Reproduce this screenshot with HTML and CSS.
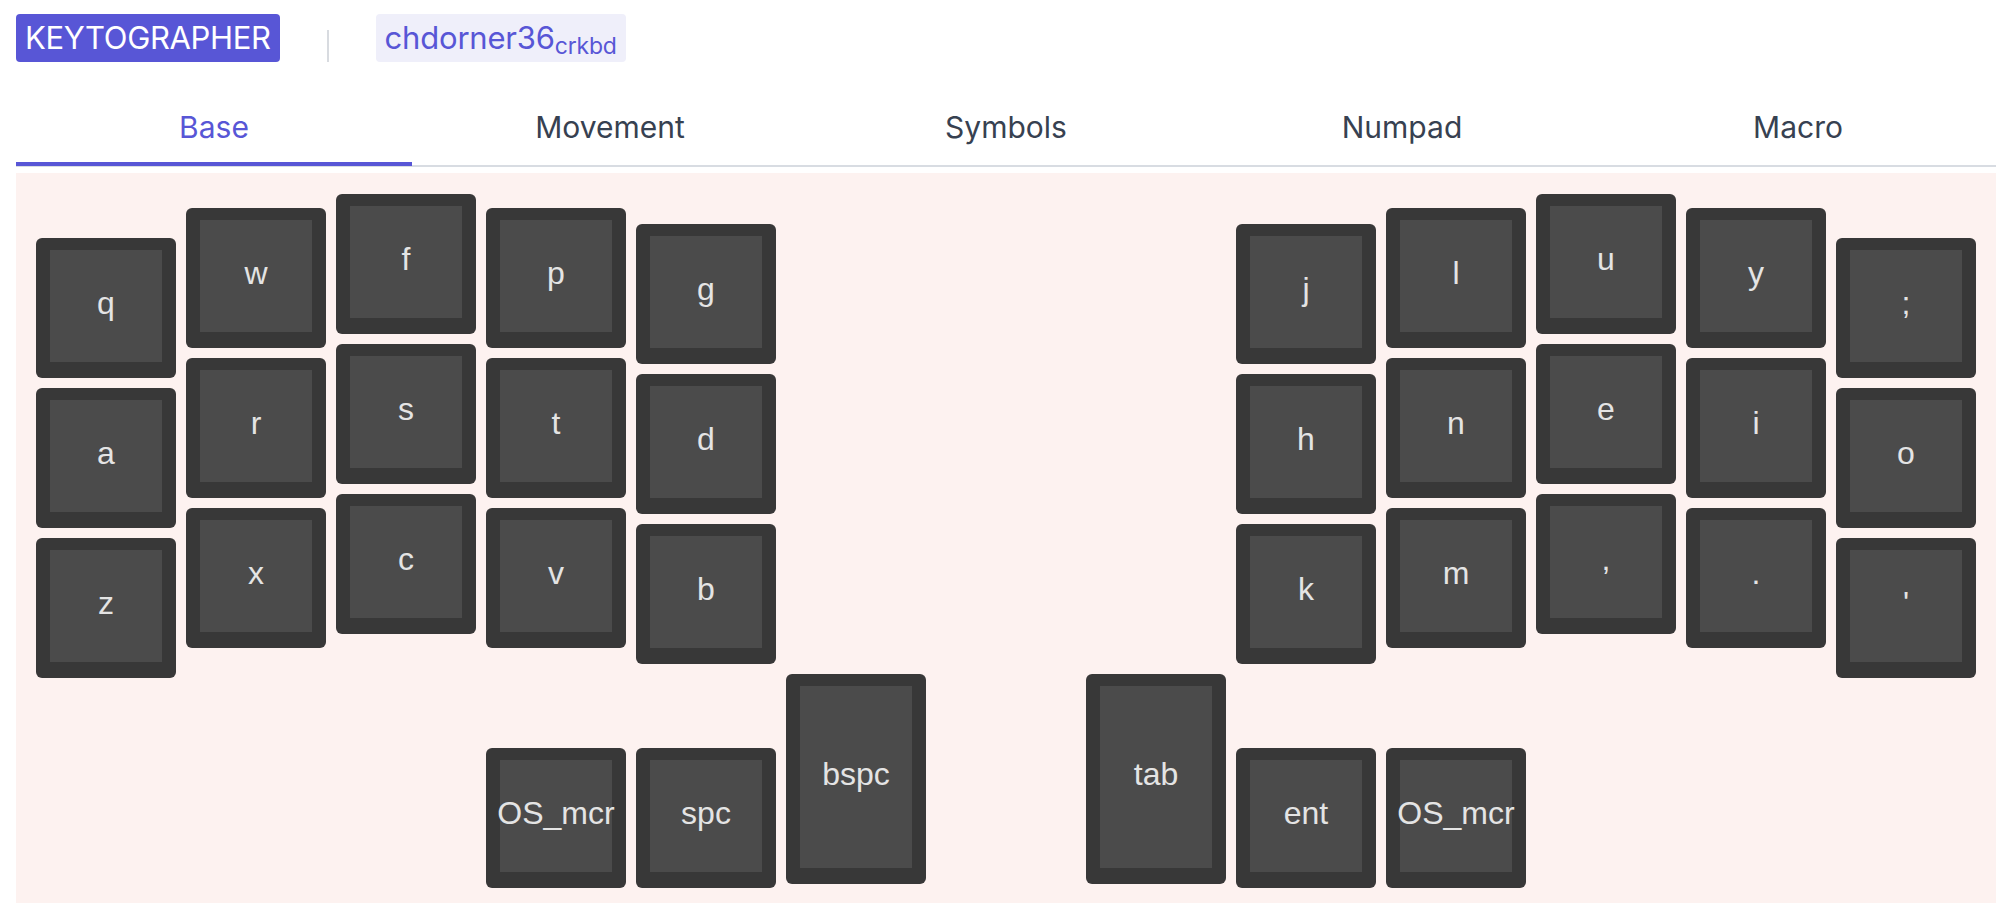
FILE: index.html
```html
<!DOCTYPE html>
<html lang="en">
<head>
<meta charset="utf-8">
<title>Keytographer</title>
<link rel="stylesheet" href="styles.css">
</head>
<body>
<div class="page">
  <header class="header">
    <span class="brand">KEYTOGRAPHER</span>
    <span class="divider"></span>
    <span class="tag">chdorner36<sub class="tag-sub">crkbd</sub></span>
  </header>

  <nav class="tabs">
    <div class="tab active">Base</div>
    <div class="tab">Movement</div>
    <div class="tab">Symbols</div>
    <div class="tab">Numpad</div>
    <div class="tab">Macro</div>
  </nav>

  <section class="board">
    <div class="half">
      <div class="col col-pinky">
        <div class="key"><div class="cap">q</div></div>
        <div class="key"><div class="cap">a</div></div>
        <div class="key"><div class="cap">z</div></div>
      </div>
      <div class="col col-ring">
        <div class="key"><div class="cap">w</div></div>
        <div class="key"><div class="cap">r</div></div>
        <div class="key"><div class="cap">x</div></div>
      </div>
      <div class="col col-middle">
        <div class="key"><div class="cap">f</div></div>
        <div class="key"><div class="cap">s</div></div>
        <div class="key"><div class="cap">c</div></div>
      </div>
      <div class="col col-index">
        <div class="key"><div class="cap">p</div></div>
        <div class="key"><div class="cap">t</div></div>
        <div class="key"><div class="cap">v</div></div>
        <div class="key thumb-index"><div class="cap">OS_mcr</div></div>
      </div>
      <div class="col col-inner">
        <div class="key"><div class="cap">g</div></div>
        <div class="key"><div class="cap">d</div></div>
        <div class="key"><div class="cap">b</div></div>
        <div class="key thumb-inner"><div class="cap">spc</div></div>
      </div>
      <div class="col col-thumb">
        <div class="key tall"><div class="cap">bspc</div></div>
      </div>
    </div>

    <div class="half">
      <div class="col col-thumb">
        <div class="key tall"><div class="cap">tab</div></div>
      </div>
      <div class="col col-inner">
        <div class="key"><div class="cap">j</div></div>
        <div class="key"><div class="cap">h</div></div>
        <div class="key"><div class="cap">k</div></div>
        <div class="key thumb-inner"><div class="cap">ent</div></div>
      </div>
      <div class="col col-index">
        <div class="key"><div class="cap">l</div></div>
        <div class="key"><div class="cap">n</div></div>
        <div class="key"><div class="cap">m</div></div>
        <div class="key thumb-index"><div class="cap">OS_mcr</div></div>
      </div>
      <div class="col col-middle">
        <div class="key"><div class="cap">u</div></div>
        <div class="key"><div class="cap">e</div></div>
        <div class="key"><div class="cap">,</div></div>
      </div>
      <div class="col col-ring">
        <div class="key"><div class="cap">y</div></div>
        <div class="key"><div class="cap">i</div></div>
        <div class="key"><div class="cap">.</div></div>
      </div>
      <div class="col col-pinky">
        <div class="key"><div class="cap">;</div></div>
        <div class="key"><div class="cap">o</div></div>
        <div class="key"><div class="cap">'</div></div>
      </div>
    </div>
  </section>
</div>
</body>
</html>
```

FILE: styles.css
```css
* {
  box-sizing: border-box;
}

html, body {
  margin: 0;
  padding: 0;
  background: #ffffff;
}

body {
  font-family: Inter, "Liberation Sans", sans-serif;
  color: #374151;
}

.page {
  padding: 14px 16px 0 16px;
}

/* ---------- header ---------- */
.header {
  display: flex;
  align-items: flex-end;
  gap: 47px;
  height: 48px;
}

.brand {
  display: block;
  height: 48px;
  line-height: 48px;
  padding: 0 9px;
  background: #5856d6;
  color: #ffffff;
  font-size: 31px;
  letter-spacing: -0.35px;
  border-radius: 4px;
  white-space: nowrap;
}

.divider {
  display: block;
  width: 2px;
  height: 32px;
  background: #d8dbe0;
}

.tag {
  display: block;
  height: 48px;
  line-height: 48px;
  padding: 0 9px;
  background: #efeffa;
  color: #5856d6;
  font-size: 31px;
  letter-spacing: -0.2px;
  border-radius: 4px;
  white-space: nowrap;
}

.tag-sub {
  font-size: 23px;
  line-height: 0;
  vertical-align: -5px;
}

/* ---------- tabs ---------- */
.tabs {
  display: flex;
  margin-top: 31px;
  border-bottom: 2px solid #d8dce2;
}

.tab {
  flex: 1 1 0;
  text-align: center;
  font-size: 30px;
  line-height: 36px;
  padding: 16px 0 17px 0;
  border-bottom: 4px solid transparent;
  margin-bottom: -1px;
  color: #374151;
}

.tab.active {
  color: #5856d6;
  border-bottom-color: #5856d6;
}

/* ---------- keyboard ---------- */
.board {
  margin-top: 6px;
  background: #fdf2f0;
  padding: 21px 20px 15px 20px;
  display: flex;
  justify-content: space-between;
  align-items: flex-start;
}

.half {
  display: flex;
  gap: 10px;
  align-items: flex-start;
}

.col {
  display: flex;
  flex-direction: column;
  gap: 10px;
  width: 140px;
}

.col-pinky { padding-top: 44px; }
.col-ring { padding-top: 14px; }
.col-middle { padding-top: 0; }
.col-index { padding-top: 14px; }
.col-inner { padding-top: 30px; }
.col-thumb { padding-top: 480px; }

.thumb-index { margin-top: 90px; }
.thumb-inner { margin-top: 74px; }

.key {
  width: 140px;
  height: 140px;
  padding: 12px 14px 16px 14px;
  background: #383838;
  border-radius: 6px;
}

.key.tall {
  height: 210px;
}

.cap {
  width: 100%;
  height: 100%;
  background: #4b4b4b;
  display: flex;
  align-items: center;
  justify-content: center;
  padding-bottom: 6px;
  font-family: "Liberation Sans", Arial, sans-serif;
  font-size: 32px;
  line-height: 1;
  color: #e4e4e4;
  white-space: nowrap;
}
```
